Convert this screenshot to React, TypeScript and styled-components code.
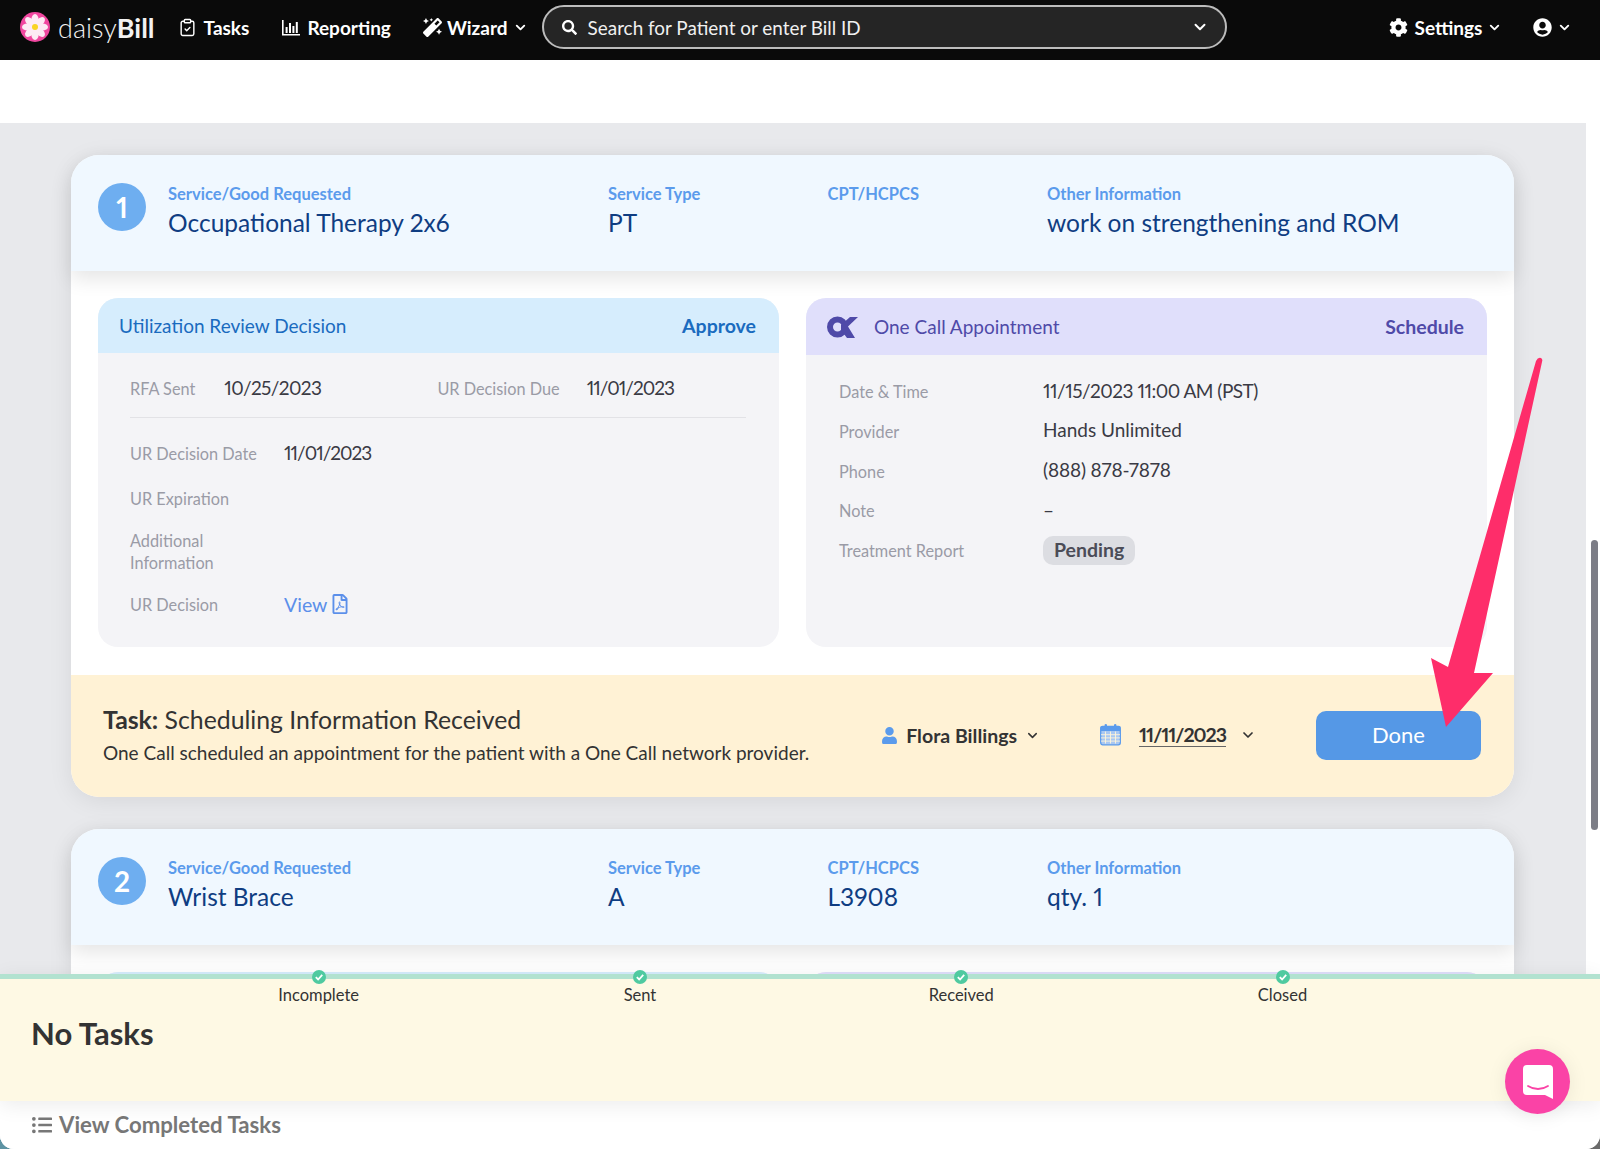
import styled, { createGlobalStyle } from "styled-components";
import { ClipboardCheck, ChevronDown } from "lucide-react";
import {
  FaCog,
  FaListUl,
  FaMagic,
  FaSearch,
  FaUser,
  FaUserCircle,
  FaRegFilePdf,
} from "react-icons/fa";

const GlobalStyle = createGlobalStyle`
  html, body {
    margin: 0;
    padding: 0;
    height: 1149px;
    overflow: hidden;
    background: linear-gradient(to right, #5d93a3 50%, #6b6b6b 50%);
    font-family: Lato, "Open Sans", "Liberation Sans", sans-serif;
    font-variant-numeric: proportional-nums;
  }
  * { box-sizing: border-box; }
`;

function Logo() {
  const petals = [0, 45, 90, 135, 180, 225, 270, 315];
  return (
    <svg width="30" height="30" viewBox="0 0 30 30">
      <circle cx="15" cy="15" r="15" fill="#f0479f" />
      {petals.map((deg) => (
        <ellipse key={deg} cx="15" cy="7.6" rx="3.6" ry="5.6" fill="#fdeaf4" transform={`rotate(${deg} 15 15)`} />
      ))}
      <circle cx="15" cy="15" r="3" fill="#f9d423" />
    </svg>
  );
}

function ReportIcon() {
  return (
    <svg width="18" height="17" viewBox="0 0 18 17" fill="#fff">
      <path d="M0 1h1.6v14H18v1.6H0z" />
      <rect x="3.6" y="8" width="2" height="6" />
      <rect x="7" y="4" width="2" height="10" />
      <rect x="10.4" y="7" width="2" height="7" />
      <rect x="13.8" y="3" width="2" height="11" />
    </svg>
  );
}

function CalendarIcon() {
  return (
    <svg width="21" height="23" viewBox="0 0 21 22">
      <rect x="0.7" y="3" width="19.6" height="18.3" rx="2" fill="#a9c8f2" stroke="#5b9bec" strokeWidth="1.3" />
      <rect x="0.7" y="3" width="19.6" height="4.5" fill="#5b9bec" />
      <rect x="4.6" y="0.4" width="2.4" height="5" rx="1.2" fill="#5b9bec" />
      <rect x="14" y="0.4" width="2.4" height="5" rx="1.2" fill="#5b9bec" />
      <path d="M5.5 8v12M10.5 8v12M15.5 8v12M1 11.2h19M1 14.4h19M1 17.6h19" stroke="#fff5d9" strokeWidth="0.9" />
    </svg>
  );
}

function OneCallLogo() {
  return (
    <svg width="31" height="22" viewBox="0 0 31 22">
      <circle cx="10.500" cy="11" r="7.500" fill="none" stroke="#4f4aa8" strokeWidth="6" />
      <path d="M14 9L23 1h8L21 10.500 28 22h-8l-6-8z" fill="#4f4aa8" />
    </svg>
  );
}

function ChatIcon() {
  return (
    <svg width="30" height="34" viewBox="0 0 30 34">
      <path d="M4 0h22a4 4 0 0 1 4 4v30l-8-4H4a4 4 0 0 1-4-4V4a4 4 0 0 1 4-4z" fill="#fff" />
      <path d="M5 21c6 4 14 4 20 0" fill="none" stroke="#fa43a6" strokeWidth="1.800" strokeLinecap="round" />
    </svg>
  );
}

function StepCheck() {
  return (
    <svg width="14" height="14" viewBox="0 0 14 14">
      <circle cx="7" cy="7" r="7" fill="#4fcaa0" />
      <path d="M3.800 7.200l2.300 2.300 4.100-4.600" fill="none" stroke="#fff" strokeWidth="1.800" />
    </svg>
  );
}

function Arrow() {
  return (
    <ArrowSvg width="1600" height="1149" viewBox="0 0 1600 1149">
      <path
        d="M1536 361q2-4 5-3 2 1 1 4L1474 673h19L1446 727 1431 658l17 9z"
        fill="#fe2d6a"
      />
    </ArrowSvg>
  );
}

type ServiceProps = { num: number; service: string; type: string; code?: string; info: string };

function ServiceHeader({ num, service, type, code, info }: ServiceProps) {
  return (
    <ServiceBar>
      <NumberBadge>{num}</NumberBadge>
      <ServiceCol $w={440}>
        <ServiceLabel>Service/Good Requested</ServiceLabel>
        <ServiceValue>{service}</ServiceValue>
      </ServiceCol>
      <ServiceCol $w={219.5}>
        <ServiceLabel>Service Type</ServiceLabel>
        <ServiceValue>{type}</ServiceValue>
      </ServiceCol>
      <ServiceCol $w={219.5}>
        <ServiceLabel>CPT/HCPCS</ServiceLabel>
        <ServiceValue>{code}</ServiceValue>
      </ServiceCol>
      <ServiceCol>
        <ServiceLabel>Other Information</ServiceLabel>
        <ServiceValue>{info}</ServiceValue>
      </ServiceCol>
    </ServiceBar>
  );
}

export default function App() {
  return (
    <Page>
      <GlobalStyle />
      <TopBar>
        <Brand>
          <Logo />
          <BrandName>
            daisy<b>Bill</b>
          </BrandName>
        </Brand>
        <NavItem $left={23}>
          <ClipboardCheck size={19} strokeWidth={1.8} />
          Tasks
        </NavItem>
        <NavItem $left={33}>
          <ReportIcon />
          Reporting
        </NavItem>
        <NavItem $left={32} $gap={5}>
          <FaMagic size={19} />
          Wizard
          <ChevronDown size={15} strokeWidth={3} />
        </NavItem>
        <SearchBox>
          <FaSearch size={15} />
          <SearchText>Search for Patient or enter Bill ID</SearchText>
          <ChevronDown size={18} strokeWidth={2.6} />
        </SearchBox>
        <NavItem $left={162}>
          <FaCog size={19} />
          Settings
          <ChevronDown size={15} strokeWidth={3} />
        </NavItem>
        <NavItem $left={31}>
          <FaUserCircle size={19} />
          <ChevronDown size={15} strokeWidth={3} />
        </NavItem>
      </TopBar>
      <WhiteGap />
      <ContentRow>
        <Main>
          <Card>
            <ServiceHeader num={1} service="Occupational Therapy 2x6" type="PT" info="work on strengthening and ROM" />
            <CardBody>
              <Panel>
                <PanelHead $tint="blue">
                  <PanelTitle>Utilization Review Decision</PanelTitle>
                  <PanelAction>Approve</PanelAction>
                </PanelHead>
                <ReviewBody>
                  <ReviewTop>
                    <FieldLabel>RFA Sent</FieldLabel>
                    <FieldValue $left={29} $track={-0.6}>
                      10/25/2023
                    </FieldValue>
                    <FieldLabel $left={116}>UR Decision Due</FieldLabel>
                    <FieldValue $left={27} $track={-1}>
                      11/01/2023
                    </FieldValue>
                  </ReviewTop>
                  <ReviewRows>
                    <ReviewRow>
                      <FieldLabel>UR Decision Date</FieldLabel>
                      <FieldValue $track={-1}>11/01/2023</FieldValue>
                    </ReviewRow>
                    <ReviewRow>
                      <FieldLabel>UR Expiration</FieldLabel>
                    </ReviewRow>
                    <ReviewRow>
                      <FieldLabel>
                        Additional
                        <br />
                        Information
                      </FieldLabel>
                    </ReviewRow>
                    <ReviewRow>
                      <FieldLabel>UR Decision</FieldLabel>
                      <ViewLink>
                        View <FaRegFilePdf size={20} />
                      </ViewLink>
                    </ReviewRow>
                  </ReviewRows>
                </ReviewBody>
              </Panel>
              <Panel>
                <PanelHead $tint="purple">
                  <PanelTitle $purple>
                    <OneCallLogo />
                    One Call Appointment
                  </PanelTitle>
                  <PanelAction $purple>Schedule</PanelAction>
                </PanelHead>
                <AppointmentList>
                  <AppointmentRow>
                    <FieldLabel>Date &amp; Time</FieldLabel>
                    <FieldValue $track={-0.5}>11/15/2023 11:00 AM (PST)</FieldValue>
                  </AppointmentRow>
                  <AppointmentRow>
                    <FieldLabel>Provider</FieldLabel>
                    <FieldValue>Hands Unlimited</FieldValue>
                  </AppointmentRow>
                  <AppointmentRow>
                    <FieldLabel>Phone</FieldLabel>
                    <FieldValue $track={-0.15}>(888) 878-7878</FieldValue>
                  </AppointmentRow>
                  <AppointmentRow>
                    <FieldLabel>Note</FieldLabel>
                    <FieldValue>–</FieldValue>
                  </AppointmentRow>
                  <AppointmentRow>
                    <FieldLabel>Treatment Report</FieldLabel>
                    <Pill>Pending</Pill>
                  </AppointmentRow>
                </AppointmentList>
              </Panel>
            </CardBody>
            <TaskBar>
              <TaskInfo>
                <TaskTitle>
                  <b>Task:</b> Scheduling Information Received
                </TaskTitle>
                <TaskText>One Call scheduled an appointment for the patient with a One Call network provider.</TaskText>
              </TaskInfo>
              <Assignee>
                <FaUser size={17} color="#5b9bec" />
                Flora Billings
                <ChevronDown size={15} strokeWidth={2.4} />
              </Assignee>
              <DuePicker>
                <CalendarIcon />
                <DueDate>11/11/2023</DueDate>
                <ChevronDown size={16} strokeWidth={2.6} />
              </DuePicker>
              <DoneButton>Done</DoneButton>
            </TaskBar>
          </Card>
          <Card>
            <ServiceHeader num={2} service="Wrist Brace" type="A" code="L3908" info="qty. 1" />
            <CardBody>
              <Panel>
                <PanelHead $tint="blue" />
              </Panel>
              <Panel>
                <PanelHead $tint="purple" />
              </Panel>
            </CardBody>
          </Card>
        </Main>
        <ScrollGutter>
          <ScrollThumb />
        </ScrollGutter>
      </ContentRow>
      <Dock>
        <DockYellow>
          <Steps>
            {["Incomplete", "Sent", "Received", "Closed"].map((s) => (
              <Step key={s}>
                <StepCheck />
                <StepLabel>{s}</StepLabel>
              </Step>
            ))}
          </Steps>
          <NoTasks>No Tasks</NoTasks>
        </DockYellow>
        <DockFooter>
          <FaListUl size={20} />
          View Completed Tasks
        </DockFooter>
      </Dock>
      <ChatButton>
        <ChatIcon />
      </ChatButton>
      <Arrow />
    </Page>
  );
}

const Page = styled.div`
  position: relative;
  width: 1600px;
  height: 1149px;
  overflow: hidden;
  background: #fff;
  border-radius: 0 0 14px 14px;
`;

const TopBar = styled.header`
  display: flex;
  align-items: center;
  height: 60px;
  padding: 0 0 6px 20px;
  background: #0a0a0a;
  color: #fff;
`;

const Brand = styled.div`
  display: flex;
  align-items: center;
  gap: 8px;
`;

const BrandName = styled.span`
  font-size: 27px;
  font-weight: 300;
  color: #f2f2f2;
  b {
    font-weight: 700;
  }
`;

const NavItem = styled.div<{ $left: number; $gap?: number }>`
  display: flex;
  align-items: center;
  gap: ${(p) => p.$gap ?? 7}px;
  margin-left: ${(p) => p.$left}px;
  font-size: 19px;
  font-weight: 700;
  svg:last-child:not(:first-child) {
    margin-left: ${(p) => (p.$gap ? 0 : -2)}px;
  }
`;

const SearchBox = styled.div`
  display: flex;
  align-items: center;
  width: 685px;
  height: 44px;
  margin-left: 14px;
  padding: 0 16px 0 18px;
  background: #252525;
  border: 2px solid #bcbcbc;
  border-radius: 22px;
`;

const SearchText = styled.span`
  flex: 1;
  margin-left: 11px;
  font-size: 18.9px;
  color: #f0f0f0;
`;

const WhiteGap = styled.div`
  height: 63px;
`;

const ContentRow = styled.div`
  display: flex;
  height: 1026px;
`;

const Main = styled.main`
  width: 1586px;
  padding: 32px 72px 0 71px;
  background: #e8e9ec;
  overflow: hidden;
`;

const ScrollGutter = styled.div`
  flex: 1;
  padding: 417px 2px 0 5px;
`;

const ScrollThumb = styled.div`
  height: 290px;
  border-radius: 4px;
  background: #7c7d86;
`;

const Card = styled.section`
  margin-bottom: 32px;
  border-radius: 28px;
  background: #fff;
  box-shadow: 0 4px 24px rgba(0, 0, 0, 0.08);
`;

const ServiceBar = styled.div`
  position: relative;
  display: flex;
  align-items: flex-start;
  height: 116px;
  padding: 28px 0 0 27px;
  background: #f0f8ff;
  border-radius: 28px 28px 0 0;
  box-shadow: 0 8px 20px rgba(0, 0, 0, 0.1);
`;

const NumberBadge = styled.div`
  display: flex;
  flex: none;
  align-items: center;
  justify-content: center;
  width: 48px;
  height: 48px;
  margin-right: 22px;
  border-radius: 50%;
  background: #6eaef0;
  color: #fff;
  font-size: 28px;
  font-weight: 700;
`;

const ServiceCol = styled.div<{ $w?: number }>`
  width: ${(p) => (p.$w ? `${p.$w}px` : "auto")};
`;

const ServiceLabel = styled.div`
  height: 22px;
  font-size: 16.5px;
  font-weight: 700;
  line-height: 22px;
  color: #5b9bec;
`;

const ServiceValue = styled.div`
  margin-top: 2px;
  height: 32px;
  font-size: 24.5px;
  line-height: 32px;
  color: #0f3d82;
`;

const CardBody = styled.div`
  display: grid;
  grid-template-columns: 681px 681px;
  gap: 27px;
  padding: 27px 27px 28px;
`;

const Panel = styled.div`
  min-height: 349px;
  border-radius: 20px;
  background: #f4f4f7;
  overflow: hidden;
`;

const PanelHead = styled.div<{ $tint: "blue" | "purple" }>`
  display: flex;
  align-items: center;
  justify-content: space-between;
  height: ${(p) => (p.$tint === "blue" ? 55 : 57)}px;
  padding: 0 23px 0 21px;
  background: ${(p) => (p.$tint === "blue" ? "#d6edfd" : "#e0dffb")};
`;

const PanelTitle = styled.div<{ $purple?: boolean }>`
  display: flex;
  align-items: center;
  gap: 16px;
  font-size: 19px;
  color: ${(p) => (p.$purple ? "#4f4aa8" : "#1a6bbf")};
`;

const PanelAction = styled.div<{ $purple?: boolean }>`
  font-size: 19.5px;
  font-weight: 700;
  color: ${(p) => (p.$purple ? "#4f4aa8" : "#1a6bbf")};
`;

const ReviewBody = styled.div`
  padding: 0 33px 0 32px;
`;

const ReviewTop = styled.div`
  display: flex;
  align-items: center;
  height: 65px;
  padding-top: 8px;
  border-bottom: 1px solid #e2e2e6;
`;

const FieldLabel = styled.div<{ $left?: number }>`
  margin-left: ${(p) => p.$left ?? 0}px;
  font-size: 16.3px;
  line-height: 22px;
  color: #9a9ba6;
`;

const FieldValue = styled.div<{ $left?: number; $track?: number }>`
  margin: -4px 0 0 ${(p) => p.$left ?? 0}px;
  font-size: 19px;
  letter-spacing: ${(p) => p.$track ?? 0}px;
  color: #3a3a44;
`;

const ReviewRows = styled.div`
  display: flex;
  flex-direction: column;
  gap: 19px;
  padding-top: 22px;
`;

const ReviewRow = styled.div`
  display: grid;
  grid-template-columns: 154px 1fr;
  align-items: center;
  min-height: 24px;
  &:first-child {
    min-height: 28px;
  }
`;

const ViewLink = styled.div`
  display: flex;
  align-items: center;
  gap: 3px;
  margin-top: -2px;
  font-size: 19.5px;
  color: #5b8fea;
`;

const AppointmentList = styled.div`
  display: flex;
  flex-direction: column;
  gap: 9.750px;
  padding: 22px 32px 0 33px;
`;

const AppointmentRow = styled.div`
  display: grid;
  grid-template-columns: 204px 1fr;
  align-items: center;
  height: 30px;
`;

const Pill = styled.div`
  justify-self: start;
  margin-top: -2px;
  padding: 0 11px;
  height: 29px;
  border-radius: 10px;
  background: #dcdde2;
  font-size: 19.5px;
  font-weight: 700;
  line-height: 27px;
  color: #4b4c57;
`;

const TaskBar = styled.div`
  display: flex;
  align-items: center;
  gap: 60px;
  height: 122px;
  padding: 0 33px 1px 32px;
  background: #fff2d5;
  border-radius: 0 0 28px 28px;
`;

const TaskInfo = styled.div`
  flex: 1;
  padding-bottom: 2px;
  white-space: nowrap;
`;

const TaskTitle = styled.div`
  font-size: 24.8px;
  line-height: 32px;
  color: #333;
`;

const TaskText = styled.div`
  margin-top: 5px;
  font-size: 19px;
  line-height: 24px;
  color: #333;
`;

const Assignee = styled.div`
  display: flex;
  align-items: center;
  gap: 8px;
  font-size: 19.5px;
  font-weight: 700;
  color: #333;
`;

const DuePicker = styled.div`
  display: flex;
  align-items: center;
  gap: 18px;
  margin-top: -2px;
  color: #333;
  svg:last-child {
    margin-left: -4px;
  }
`;

const DueDate = styled.span`
  font-size: 19.5px;
  font-weight: 700;
  letter-spacing: -1px;
  border-bottom: 1px solid #666;
`;

const DoneButton = styled.button`
  width: 165px;
  height: 49px;
  border: none;
  border-radius: 10px;
  background: #5598e6;
  color: #fff;
  font-family: inherit;
  font-size: 22px;
  font-weight: 400;
  padding-bottom: 3px;
`;

const Dock = styled.div`
  position: absolute;
  top: 974px;
  left: 0;
  right: 0;
  bottom: 0;
  background: #fff;
`;

const DockYellow = styled.div`
  position: relative;
  height: 127px;
  border-top: 5px solid #b2e2d0;
  background: #fef9e4;
  box-shadow: 0 4px 20px rgba(0, 0, 0, 0.08);
`;

const Steps = styled.div`
  display: grid;
  grid-template-columns: repeat(4, 321.300px);
  margin-top: -9px;
  padding-left: 158px;
`;

const Step = styled.div`
  display: flex;
  flex-direction: column;
  align-items: center;
  gap: 1px;
`;

const StepLabel = styled.div`
  font-size: 16.5px;
  line-height: 20px;
  color: #333;
`;

const NoTasks = styled.h2`
  margin: 8px 0 0 31px;
  font-size: 31px;
  font-weight: 700;
  line-height: 40px;
  color: #333;
`;

const DockFooter = styled.div`
  display: flex;
  align-items: center;
  gap: 7px;
  height: 47px;
  padding-left: 32px;
  font-size: 22.2px;
  font-weight: 700;
  color: #777;
`;

const ChatButton = styled.div`
  position: absolute;
  top: 1049px;
  left: 1505px;
  display: flex;
  align-items: center;
  justify-content: center;
  width: 65px;
  height: 65px;
  border-radius: 50%;
  background: #fa43a6;
  box-shadow: 0 2px 20px rgba(0, 0, 0, 0.08);
`;

const ArrowSvg = styled.svg`
  position: absolute;
  top: 0;
  left: 0;
  pointer-events: none;
`;
